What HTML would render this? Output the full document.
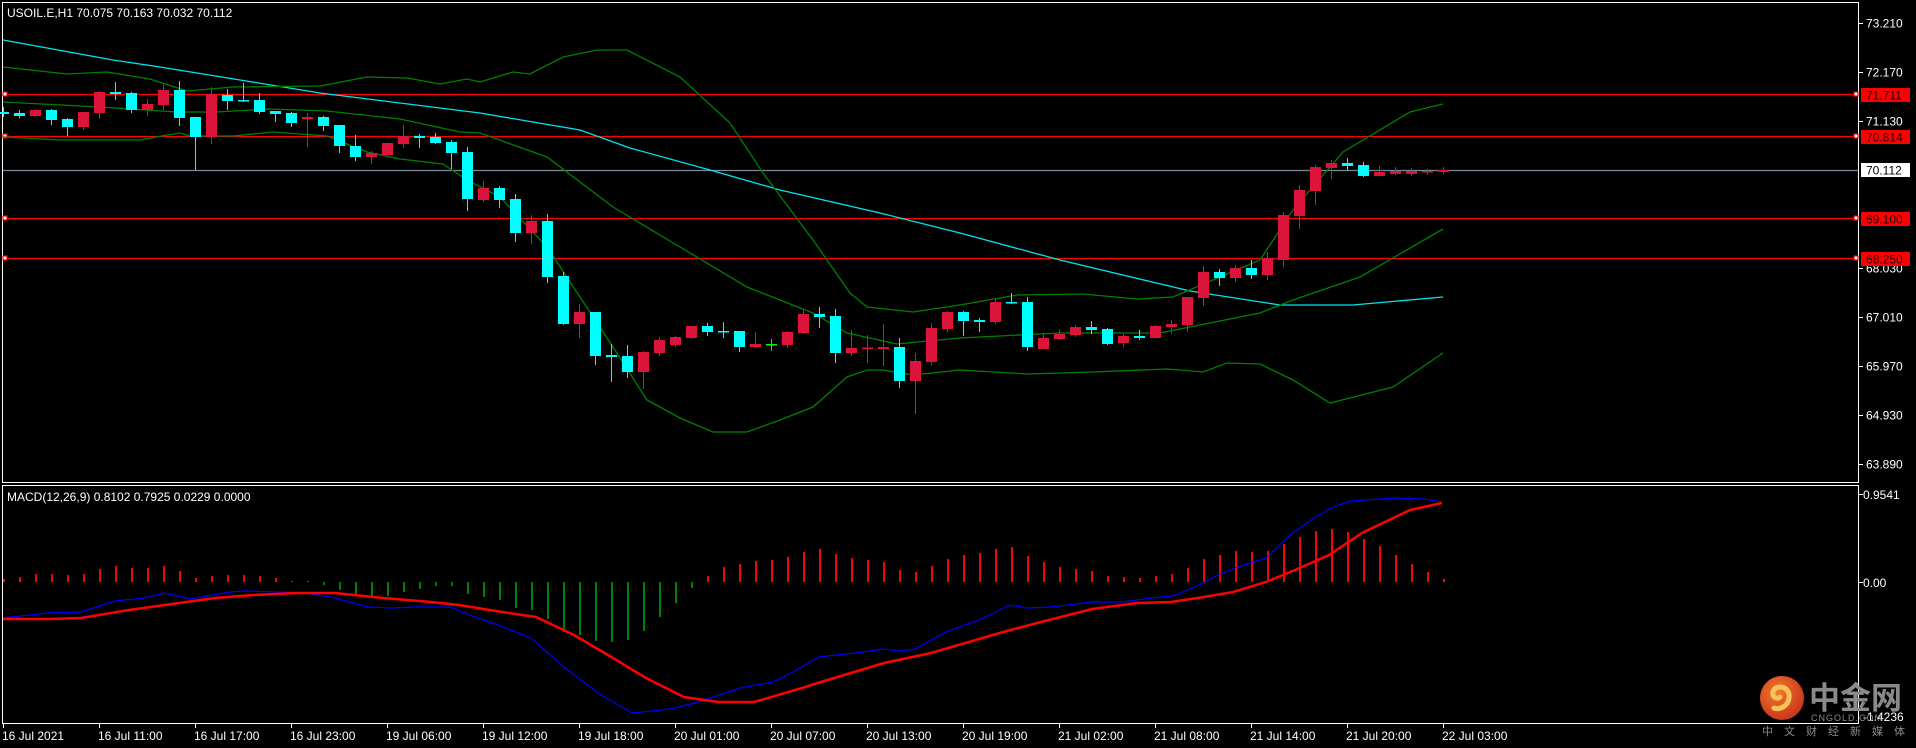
<!DOCTYPE html>
<html><head><meta charset="utf-8"><style>
html,body{margin:0;padding:0;background:#000;width:1916px;height:748px;overflow:hidden}
svg{display:block}
text{font-family:"Liberation Sans","Noto Sans CJK SC",sans-serif}
</style></head><body>
<svg width="1916" height="748" viewBox="0 0 1916 748" xmlns="http://www.w3.org/2000/svg">
<rect width="1916" height="748" fill="#000"/>
<!-- frames -->
<rect x="2.5" y="2.5" width="1856" height="480" fill="none" stroke="#fff" stroke-width="1"/>
<rect x="2.5" y="485.5" width="1856" height="238" fill="none" stroke="#fff" stroke-width="1"/>
<!-- price axis ticks & labels -->
<g stroke="#fff" stroke-width="1">
<line x1="1859" y1="23.5" x2="1863" y2="23.5"/><line x1="1859" y1="72.5" x2="1863" y2="72.5"/><line x1="1859" y1="121.5" x2="1863" y2="121.5"/><line x1="1859" y1="268.5" x2="1863" y2="268.5"/><line x1="1859" y1="317.5" x2="1863" y2="317.5"/><line x1="1859" y1="366.5" x2="1863" y2="366.5"/><line x1="1859" y1="415.5" x2="1863" y2="415.5"/><line x1="1859" y1="464.5" x2="1863" y2="464.5"/>
<line x1="1859" y1="494.5" x2="1863" y2="494.5"/><line x1="1859" y1="582.5" x2="1863" y2="582.5"/>
</g>
<g fill="#fff" font-size="12">
<text x="1866" y="27.5">73.210</text><text x="1866" y="76.5">72.170</text><text x="1866" y="125.5">71.130</text><text x="1866" y="272.5">68.030</text><text x="1866" y="321.5">67.010</text><text x="1866" y="370.5">65.970</text><text x="1866" y="419.5">64.930</text><text x="1866" y="468.5">63.890</text>
<text x="1863" y="499">0.9541</text><text x="1863" y="587">0.00</text><text x="1863" y="721">-1.4236</text>
</g>
<!-- horizontal lines -->
<g stroke="#ff0000" stroke-width="1.3">
<line x1="3" y1="94.5" x2="1858" y2="94.5"/><line x1="3" y1="136.5" x2="1858" y2="136.5"/><line x1="3" y1="218.5" x2="1858" y2="218.5"/><line x1="3" y1="258.5" x2="1858" y2="258.5"/>
</g>
<line x1="3" y1="170.5" x2="1858" y2="170.5" stroke="#778899" stroke-width="1.3"/>
<g fill="#fff" stroke="#ff0000" stroke-width="1.2">
<rect x="3" y="92" width="4" height="4"/><rect x="3" y="134" width="4" height="4"/><rect x="3" y="216" width="4" height="4"/><rect x="3" y="256" width="4" height="4"/>
<rect x="1854" y="92" width="4" height="4"/><rect x="1854" y="134" width="4" height="4"/><rect x="1854" y="216" width="4" height="4"/><rect x="1854" y="256" width="4" height="4"/>
</g>
<g font-size="12">
<rect x="1861" y="88" width="49" height="14" fill="#ff0000"/><text x="1866" y="99.5" fill="#200">71.711</text>
<rect x="1861" y="130" width="49" height="14" fill="#ff0000"/><text x="1866" y="141.5" fill="#200">70.814</text>
<rect x="1861" y="163" width="49" height="14" fill="#fff"/><text x="1866" y="174.5" fill="#000">70.112</text>
<rect x="1861" y="212" width="49" height="14" fill="#ff0000"/><text x="1866" y="223.5" fill="#200">69.100</text>
<rect x="1861" y="252" width="49" height="14" fill="#ff0000"/><text x="1866" y="263.5" fill="#200">68.250</text>
</g>
<!-- MA & Bollinger -->
<polyline fill="none" stroke="#00e5ee" stroke-width="1.3" points="3,40 113,60 160,67 240,80 320,93 400,103 480,113 580,130 630,148 710,170 780,190 880,213 960,233 1060,260 1190,291 1280,305 1353,305 1443,297"/>
<g fill="none" stroke="#008000" stroke-width="1.3">
<polyline points="3,102 100,107 177,112 217,112 267,109 327,111 400,119 460,132 480,133 547,157 613,207 680,247 747,287 813,313 847,333 897,344 960,338 1060,333 1160,333 1260,313 1293,300 1360,277 1443,229"/>
<polyline points="3,67 67,74 107,72 150,79 187,91 233,87 320,86 367,77 407,78 440,84 467,79 480,82 513,72 530,74 563,57 597,50 627,50 680,77 730,123 763,173 813,240 850,293 867,307 913,312 960,305 1017,295 1083,294 1137,299 1173,297 1260,260 1293,210 1343,152 1410,112 1443,104"/>
<polyline points="3,137 60,140 140,140 167,135 180,133 190,136 233,136 273,132 327,136 367,152 400,159 443,164 467,180 500,197 547,247 580,297 613,347 647,400 680,418 713,432 747,432 780,420 813,407 847,377 867,370 883,370 913,375 960,370 1027,374 1093,372 1167,369 1203,372 1227,363 1260,364 1293,380 1330,403 1393,387 1443,353"/>
</g>
<!-- candles -->
<g id="candles"></g>
<g>
<!-- generated static candles -->
<g fill="#00ffff">
<rect x="3" y="107" width="1" height="10"/><rect x="-2" y="112" width="11" height="2"/>
<rect x="19" y="110" width="1" height="8"/><rect x="14" y="113" width="11" height="3"/>
<rect x="51" y="109" width="1" height="16"/><rect x="46" y="110" width="11" height="10"/>
<rect x="67" y="118" width="1" height="18"/><rect x="62" y="119" width="11" height="8"/>
<rect x="115" y="82" width="1" height="18"/><rect x="110" y="92" width="11" height="2"/>
<rect x="131" y="92" width="1" height="21"/><rect x="126" y="93" width="11" height="17"/>
<rect x="179" y="81" width="1" height="45"/><rect x="174" y="90" width="11" height="28"/>
<rect x="195" y="117" width="1" height="53"/><rect x="190" y="117" width="11" height="20"/>
<rect x="227" y="89" width="1" height="21"/><rect x="222" y="95" width="11" height="6"/>
<rect x="243" y="83" width="1" height="19"/><rect x="238" y="100" width="11" height="1.5"/>
<rect x="259" y="93" width="1" height="21"/><rect x="254" y="100" width="11" height="12"/>
<rect x="275" y="111" width="1" height="11"/><rect x="270" y="111" width="11" height="3"/>
<rect x="291" y="112" width="1" height="15"/><rect x="286" y="113" width="11" height="10"/>
<rect x="323" y="116" width="1" height="15"/><rect x="318" y="117" width="11" height="9"/>
<rect x="339" y="125" width="1" height="28"/><rect x="334" y="125" width="11" height="21"/>
<rect x="355" y="135" width="1" height="26"/><rect x="350" y="146" width="11" height="11"/>
<rect x="419" y="134" width="1" height="14"/><rect x="414" y="136" width="11" height="2"/>
<rect x="435" y="133" width="1" height="11"/><rect x="430" y="137" width="11" height="6"/>
<rect x="451" y="140" width="1" height="29"/><rect x="446" y="142" width="11" height="11"/>
<rect x="467" y="147" width="1" height="64"/><rect x="462" y="152" width="11" height="47"/>
<rect x="499" y="186" width="1" height="22"/><rect x="494" y="188" width="11" height="12"/>
<rect x="515" y="194" width="1" height="48"/><rect x="510" y="199" width="11" height="34"/>
<rect x="547" y="214" width="1" height="69"/><rect x="542" y="221" width="11" height="56"/>
<rect x="563" y="272" width="1" height="53"/><rect x="558" y="276" width="11" height="48"/>
<rect x="595" y="312" width="1" height="53"/><rect x="590" y="312" width="11" height="44"/>
<rect x="611" y="344" width="1" height="38"/><rect x="606" y="355" width="11" height="2"/>
<rect x="627" y="345" width="1" height="33"/><rect x="622" y="356" width="11" height="16"/>
<rect x="707" y="323" width="1" height="13"/><rect x="702" y="326" width="11" height="6"/>
<rect x="723" y="322" width="1" height="16"/><rect x="718" y="331" width="11" height="1.5"/>
<rect x="739" y="331" width="1" height="21"/><rect x="734" y="331" width="11" height="16"/>
<rect x="819" y="307" width="1" height="21"/><rect x="814" y="314" width="11" height="3"/>
<rect x="835" y="309" width="1" height="54"/><rect x="830" y="316" width="11" height="37"/>
<rect x="899" y="338" width="1" height="50"/><rect x="894" y="347" width="11" height="34"/>
<rect x="963" y="311" width="1" height="25"/><rect x="958" y="312" width="11" height="9"/>
<rect x="979" y="318" width="1" height="14"/><rect x="974" y="320" width="11" height="2"/>
<rect x="1011" y="293" width="1" height="11"/><rect x="1006" y="302" width="11" height="1.5"/>
<rect x="1027" y="297" width="1" height="54"/><rect x="1022" y="302" width="11" height="45"/>
<rect x="1091" y="321" width="1" height="13"/><rect x="1086" y="327" width="11" height="3"/>
<rect x="1107" y="328" width="1" height="17"/><rect x="1102" y="329" width="11" height="15"/>
<rect x="1139" y="330" width="1" height="10"/><rect x="1134" y="336" width="11" height="2"/>
<rect x="1219" y="269" width="1" height="17"/><rect x="1214" y="272" width="11" height="6"/>
<rect x="1251" y="260" width="1" height="19"/><rect x="1246" y="268" width="11" height="7"/>
<rect x="1347" y="158" width="1" height="12"/><rect x="1342" y="163" width="11" height="3"/>
<rect x="1363" y="162" width="1" height="15"/><rect x="1358" y="165" width="11" height="11"/>
</g>
<g fill="#dc143c">
<rect x="35" y="109" width="1" height="8"/><rect x="30" y="110" width="11" height="6"/>
<rect x="83" y="112" width="1" height="18"/><rect x="78" y="112" width="11" height="15"/>
<rect x="99" y="91" width="1" height="28"/><rect x="94" y="92" width="11" height="21"/>
<rect x="147" y="99" width="1" height="17"/><rect x="142" y="104" width="11" height="6"/>
<rect x="163" y="83" width="1" height="27"/><rect x="158" y="90" width="11" height="15"/>
<rect x="211" y="87" width="1" height="57"/><rect x="206" y="94" width="11" height="43"/>
<rect x="307" y="113" width="1" height="34"/><rect x="302" y="117" width="11" height="2"/>
<rect x="371" y="151" width="1" height="13"/><rect x="366" y="153" width="11" height="4"/>
<rect x="387" y="143" width="1" height="13"/><rect x="382" y="143" width="11" height="12"/>
<rect x="403" y="125" width="1" height="23"/><rect x="398" y="136" width="11" height="8"/>
<rect x="483" y="181" width="1" height="21"/><rect x="478" y="188" width="11" height="12"/>
<rect x="531" y="215" width="1" height="29"/><rect x="526" y="221" width="11" height="12"/>
<rect x="579" y="304" width="1" height="34"/><rect x="574" y="312" width="11" height="12"/>
<rect x="643" y="351" width="1" height="38"/><rect x="638" y="352" width="11" height="20"/>
<rect x="659" y="337" width="1" height="19"/><rect x="654" y="340" width="11" height="13"/>
<rect x="675" y="336" width="1" height="11"/><rect x="670" y="337" width="11" height="8"/>
<rect x="691" y="326" width="1" height="13"/><rect x="686" y="326" width="11" height="12"/>
<rect x="755" y="332" width="1" height="16"/><rect x="750" y="344" width="11" height="3"/>
<rect x="787" y="331" width="1" height="17"/><rect x="782" y="332" width="11" height="13"/>
<rect x="803" y="309" width="1" height="25"/><rect x="798" y="314" width="11" height="19"/>
<rect x="851" y="330" width="1" height="26"/><rect x="846" y="348" width="11" height="5"/>
<rect x="867" y="335" width="1" height="28"/><rect x="862" y="347.5" width="11" height="1.5"/>
<rect x="883" y="324" width="1" height="42"/><rect x="878" y="347" width="11" height="2"/>
<rect x="915" y="353" width="1" height="61"/><rect x="910" y="361" width="11" height="20"/>
<rect x="931" y="323" width="1" height="42"/><rect x="926" y="328" width="11" height="34"/>
<rect x="947" y="311" width="1" height="21"/><rect x="942" y="312" width="11" height="17"/>
<rect x="995" y="299" width="1" height="25"/><rect x="990" y="302" width="11" height="20"/>
<rect x="1043" y="333" width="1" height="16"/><rect x="1038" y="338" width="11" height="11"/>
<rect x="1059" y="329" width="1" height="11"/><rect x="1054" y="334" width="11" height="5"/>
<rect x="1075" y="325" width="1" height="12"/><rect x="1070" y="327" width="11" height="8"/>
<rect x="1123" y="334" width="1" height="13"/><rect x="1118" y="336" width="11" height="7"/>
<rect x="1155" y="325" width="1" height="13"/><rect x="1150" y="326" width="11" height="12"/>
<rect x="1171" y="320" width="1" height="14"/><rect x="1166" y="324" width="11" height="3"/>
<rect x="1187" y="297" width="1" height="35"/><rect x="1182" y="297" width="11" height="28"/>
<rect x="1203" y="266" width="1" height="40"/><rect x="1198" y="272" width="11" height="26"/>
<rect x="1235" y="265" width="1" height="17"/><rect x="1230" y="268" width="11" height="10"/>
<rect x="1267" y="252" width="1" height="28"/><rect x="1262" y="258" width="11" height="17"/>
<rect x="1283" y="212" width="1" height="55"/><rect x="1278" y="215" width="11" height="45"/>
<rect x="1299" y="185" width="1" height="44"/><rect x="1294" y="190" width="11" height="26"/>
<rect x="1315" y="165" width="1" height="40"/><rect x="1310" y="167" width="11" height="24"/>
<rect x="1331" y="160" width="1" height="19"/><rect x="1326" y="163" width="11" height="5"/>
<rect x="1379" y="166" width="1" height="10"/><rect x="1374" y="172" width="11" height="4"/>
<rect x="1395" y="167" width="1" height="8"/><rect x="1390" y="171" width="11" height="3"/>
<rect x="1411" y="168" width="1" height="8"/><rect x="1406" y="171" width="11" height="3"/>
<rect x="1427" y="169" width="1" height="6"/><rect x="1422" y="171" width="11" height="1.5"/>
<rect x="1443" y="167" width="1" height="7"/><rect x="1438" y="170" width="11" height="2"/>
</g>
<g fill="#00ff00"><rect x="771" y="339" width="1" height="12"/><rect x="766" y="344" width="11" height="1.5"/></g>
</g>
<!-- header -->
<text x="7" y="17" fill="#fff" font-size="12">USOIL.E,H1  70.075 70.163 70.032 70.112</text>
<text x="7" y="501" fill="#fff" font-size="12">MACD(12,26,9) 0.8102 0.7925 0.0229 0.0000</text>
<!-- MACD histogram -->
<path fill="none" stroke="#ff0000" stroke-width="2" d="M4 582V579M20 582V577M36 582V574M52 582V574M68 582V575M84 582V574M100 582V569M116 582V566M132 582V568M148 582V568M164 582V566M180 582V571M196 582V578M212 582V576M228 582V575M244 582V575M260 582V576M276 582V578M292 582V581M308 582V581
M708 582V576M724 582V567M740 582V564M756 582V561M772 582V560M788 582V557M804 582V552M820 582V549M836 582V554M852 582V558M868 582V560M884 582V562M900 582V570M916 582V572M932 582V566M948 582V559M964 582V555M980 582V553M996 582V549M1012 582V547M1028 582V556M1044 582V562M1060 582V567M1076 582V569M1092 582V571M1108 582V576M1124 582V577M1140 582V578M1156 582V576M1172 582V574M1188 582V568M1204 582V559M1220 582V555M1236 582V551M1252 582V552M1268 582V551M1284 582V544M1300 582V537M1316 582V531M1332 582V529M1348 582V532M1364 582V539M1380 582V546M1396 582V555M1412 582V564M1428 582V572M1444 582V579"/>
<path fill="none" stroke="#008000" stroke-width="2" d="M324 582V585M340 582V590M356 582V595M372 582V598M388 582V596M404 582V592M420 582V589M436 582V586M452 582V586M468 582V594M484 582V597M500 582V600M516 582V608M532 582V610M548 582V619M564 582V632M580 582V635M596 582V641M612 582V642M628 582V640M644 582V631M660 582V617M676 582V603M692 582V588"/>
<!-- MACD lines -->
<polyline fill="none" stroke="#0000ff" stroke-width="1.2" points="3,618 48,613 81,612 115,601 144,598 165,593 191,599 230,592 244,591 278,592 306,593 335,598 368,607 392,608 416,607 450,607 469,615 498,625 531,638 565,668 598,693 632,713 670,709 699,702 740,688 773,682 793,672 819,657 855,653 884,649 900,651 915,649 946,632 979,620 1010,605 1027,608 1051,607 1092,602 1123,602 1151,598 1173,596 1199,585 1218,575 1238,567 1266,558 1290,535 1314,518 1333,507 1350,501 1395,498 1424,499 1442,502"/>
<polyline fill="none" stroke="#ff0000" stroke-width="2.5" points="3,619 48,619 81,618 129,610 165,605 215,598 254,595 297,593 335,593 383,598 431,602 459,605 502,612 536,617 574,635 608,655 646,678 684,697 718,702 754,702 802,688 821,682 884,663 931,653 1003,632 1041,622 1092,609 1137,603 1171,602 1204,597 1233,592 1266,582 1295,570 1329,555 1362,533 1410,510 1442,503"/>
<!-- time axis -->
<g stroke="#fff" stroke-width="1">
<line x1="3.5" y1="724" x2="3.5" y2="728"/><line x1="99.5" y1="724" x2="99.5" y2="728"/><line x1="195.5" y1="724" x2="195.5" y2="728"/><line x1="291.5" y1="724" x2="291.5" y2="728"/><line x1="387.5" y1="724" x2="387.5" y2="728"/><line x1="483.5" y1="724" x2="483.5" y2="728"/><line x1="579.5" y1="724" x2="579.5" y2="728"/><line x1="675.5" y1="724" x2="675.5" y2="728"/><line x1="771.5" y1="724" x2="771.5" y2="728"/><line x1="867.5" y1="724" x2="867.5" y2="728"/><line x1="963.5" y1="724" x2="963.5" y2="728"/><line x1="1059.5" y1="724" x2="1059.5" y2="728"/><line x1="1155.5" y1="724" x2="1155.5" y2="728"/><line x1="1251.5" y1="724" x2="1251.5" y2="728"/><line x1="1347.5" y1="724" x2="1347.5" y2="728"/><line x1="1443.5" y1="724" x2="1443.5" y2="728"/>
</g>
<g fill="#fff" font-size="12">
<text x="2" y="740">16 Jul 2021</text><text x="98" y="740">16 Jul 11:00</text><text x="194" y="740">16 Jul 17:00</text><text x="290" y="740">16 Jul 23:00</text><text x="386" y="740">19 Jul 06:00</text><text x="482" y="740">19 Jul 12:00</text><text x="578" y="740">19 Jul 18:00</text><text x="674" y="740">20 Jul 01:00</text><text x="770" y="740">20 Jul 07:00</text><text x="866" y="740">20 Jul 13:00</text><text x="962" y="740">20 Jul 19:00</text><text x="1058" y="740">21 Jul 02:00</text><text x="1154" y="740">21 Jul 08:00</text><text x="1250" y="740">21 Jul 14:00</text><text x="1346" y="740">21 Jul 20:00</text><text x="1442" y="740">22 Jul 03:00</text>
</g>
<!-- watermark logo -->
<defs><radialGradient id="lg" cx="0.4" cy="0.35" r="0.7"><stop offset="0" stop-color="#f07a2a"/><stop offset="1" stop-color="#c8321a"/></radialGradient></defs>
<circle cx="1782" cy="698" r="22" fill="url(#lg)"/>
<path d="M1774 708c6 2 14-2 15-10 1-6-3-11-9-11-5 0-8 4-7 8 1 3 5 4 7 2" fill="none" stroke="#f8c25a" stroke-width="5" stroke-linecap="round"/>
<text x="1809" y="709" fill="#8a8a8a" font-size="31" font-weight="bold" font-family="'Noto Sans CJK SC',sans-serif">中金网</text>
<text x="1811" y="721" fill="#8a8a8a" font-size="9" letter-spacing="1">CNGOLD.COM</text>
<text x="1762" y="735" fill="#8a8a8a" font-size="11" letter-spacing="11" font-family="'Noto Sans CJK SC',sans-serif">中文财经新媒体</text>
</svg>
</body></html>
